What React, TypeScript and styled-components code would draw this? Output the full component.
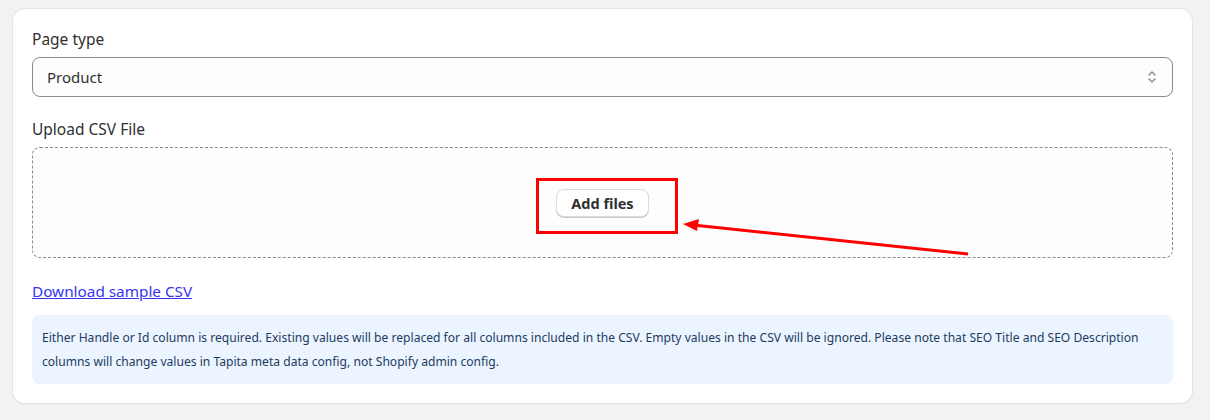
import React from "react";
import styled, { createGlobalStyle } from "styled-components";

const Global = createGlobalStyle`
  html, body { margin: 0; padding: 0; background: #f1f2f4; }
  body { font-family: "Noto Sans", "Open Sans", sans-serif; color: #303030; }
  * { box-sizing: border-box; }
`;

const Page = styled.div`
  padding: 9px 18px 16px 13px;
  width: 1210px;
  height: 420px;
`;

const Card = styled.div`
  background: #ffffff;
  border-radius: 12px;
  box-shadow: 0 0 0 1px #e3e3e3, 0 1px 1px rgba(0, 0, 0, 0.12);
  padding: 20px 19px 19px 19px;
  display: flex;
  flex-direction: column;
  width: 1179px;
`;

const Field = styled.div<{ mb: number }>`
  display: flex;
  flex-direction: column;
  gap: 7px;
  margin-bottom: ${(p) => p.mb}px;
`;

const Label = styled.label`
  font-size: 15.5px;
  line-height: 21px;
  color: #303030;
`;

const SelectBox = styled.div`
  height: 40px;
  border: 1px solid #8a8a8a;
  border-radius: 8px;
  background: #fdfdfd;
  display: flex;
  align-items: center;
  justify-content: space-between;
  padding: 0 14px 0 14px;
  font-size: 15px;
  color: #303030;
`;

const DropZone = styled.div`
  position: relative;
  height: 111px;
  border: 1px dashed #8a8a8a;
  border-radius: 8px;
  background: #fdfdfd;
  display: flex;
  align-items: center;
  justify-content: center;
`;

const Highlight = styled.div`
  padding: 8px 26px 14px 17px;
  border: 3px solid #ff0000;
  margin-left: 9px;
  margin-top: 7px;
`;

const Button = styled.button`
  font-family: inherit;
  display: block;
  height: 28px;
  padding: 0 14px;
  border-radius: 8px;
  border: 1px solid #dcdcdc;
  background: #ffffff;
  box-shadow: 0 1px 0 #c9c9c9;
  font-size: 14.5px;
  font-weight: 700;
  color: #303030;
`;

const Arrow = styled.svg`
  position: absolute;
  left: 650px;
  top: 63px;
  overflow: visible;
`;

const Link = styled.a`
  font-size: 15.3px;
  line-height: 21px;
  color: #3535f0;
  text-decoration: underline;
  margin-top: 23px;
  align-self: flex-start;
`;

const Info = styled.div`
  margin-top: 13px;
  background: #ebf4ff;
  border-radius: 8px;
  padding: 11px 10px 10px 10px;
  font-size: 12.1px;
  line-height: 24px;
  color: #1d3b5f;
`;

export default function App() {
  return (
    <>
      <Global />
      <Page>
        <Card>
          <Field mb={22}>
            <Label>Page type</Label>
            <SelectBox>
              <span>Product</span>
              <svg width="12" height="16" viewBox="0 0 12 16" fill="none">
                <path d="M3 6l3-3 3 3" stroke="#8a8a8a" strokeWidth="1.4" strokeLinecap="round" strokeLinejoin="round" />
                <path d="M3 10l3 3 3-3" stroke="#8a8a8a" strokeWidth="1.4" strokeLinecap="round" strokeLinejoin="round" />
              </svg>
            </SelectBox>
          </Field>
          <Field mb={0}>
            <Label>Upload CSV File</Label>
            <DropZone>
              <Highlight>
                <Button>Add files</Button>
              </Highlight>
              <Arrow width="300" height="40">
                <line x1="10" y1="14" x2="285" y2="43" stroke="#ff0000" strokeWidth="3" />
                <polygon points="0,13 16,8 14,20" fill="#ff0000" />
              </Arrow>
            </DropZone>
          </Field>
          <Link href="#">Download sample CSV</Link>
          <Info>
            Either Handle or Id column is required. Existing values will be replaced for all columns included in the CSV. Empty values in the CSV will be ignored. Please note that SEO Title and SEO Description columns will change values in Tapita meta data config, not Shopify admin config.
          </Info>
        </Card>
      </Page>
    </>
  );
}
